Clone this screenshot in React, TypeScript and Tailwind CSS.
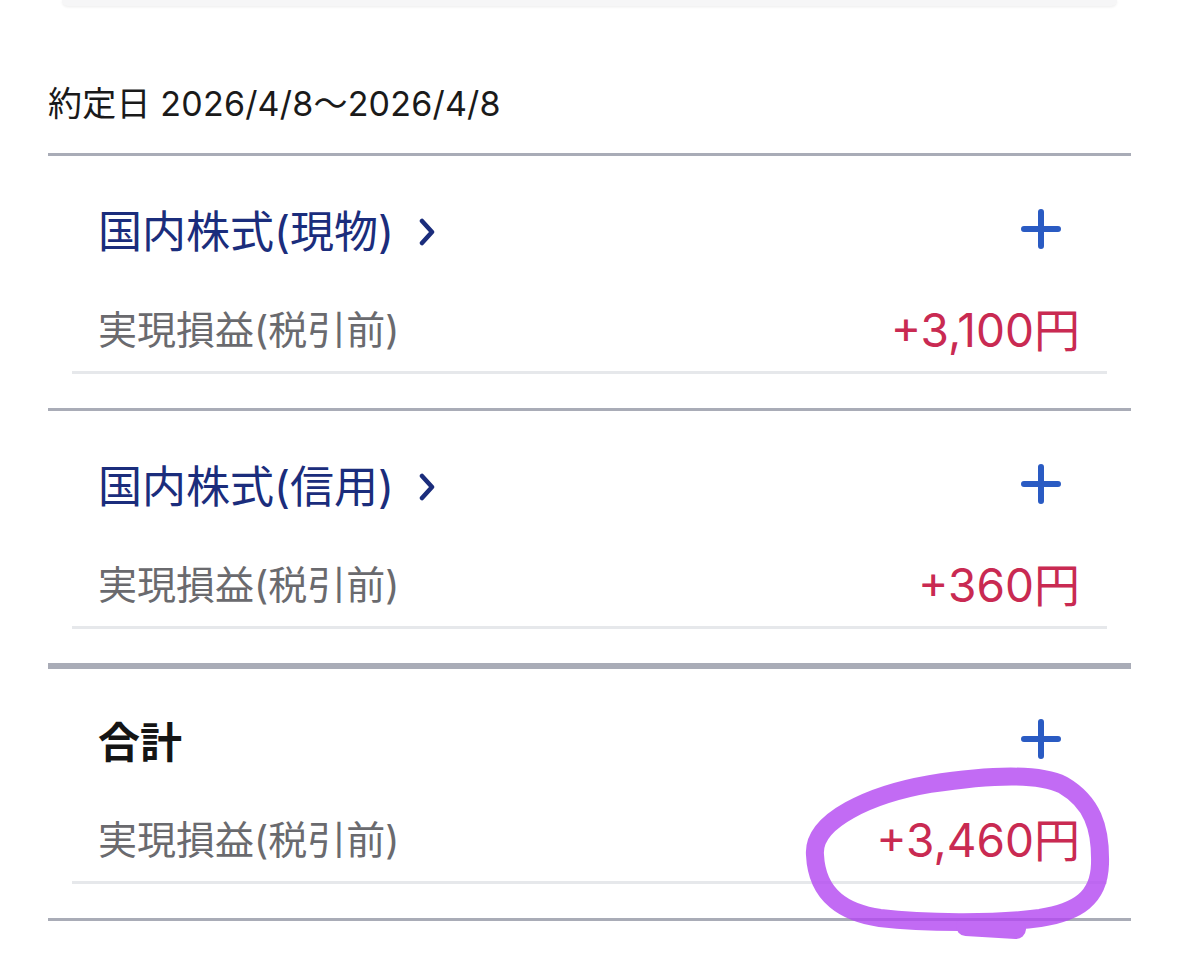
import React from 'react'

const font = { fontFamily: 'Inter, "Noto Sans CJK JP", sans-serif' }

function Plus() {
  return (
    <svg width="40" height="40" viewBox="0 0 40 40" aria-hidden="true" className="-mt-[7px]">
      <path d="M20 3V37M3 20H37" stroke="#2a5bc3" strokeWidth="6" strokeLinecap="round" fill="none" />
    </svg>
  )
}

function Chevron() {
  return (
    <svg width="16" height="28" viewBox="0 0 16 28" aria-hidden="true" className="ml-[25px]">
      <path d="M3 3L13 14L3 25" stroke="#1b2d7c" strokeWidth="4.5" strokeLinecap="round" strokeLinejoin="round" fill="none" />
    </svg>
  )
}

type Section = {
  title: string
  link: boolean
  value: string
  border: string
  titleGap: string
}

const sections: Section[] = [
  { title: '国内株式(現物)', link: true, value: '+3,100円', border: 'border-t-[3px]', titleGap: 'mt-[46px]' },
  { title: '国内株式(信用)', link: true, value: '+360円', border: 'border-t-[3px]', titleGap: 'mt-[46px]' },
  { title: '合計', link: false, value: '+3,460円', border: 'border-t-[6px]', titleGap: 'mt-[43px]' },
]

function ProfitSection({ s }: { s: Section }) {
  return (
    <div className={`${s.border} border-[#a9acb7]`}>
      <div className={`${s.titleGap} flex h-[60px] items-center justify-between pl-[50px] pr-[70px]`}>
        {s.link ? (
          <div className="flex items-center text-[44px] font-normal text-[#1b2d7c]">
            <span>{s.title}</span>
            <Chevron />
          </div>
        ) : (
          <div className="text-[42px] font-bold text-[#151515]">{s.title}</div>
        )}
        <Plus />
      </div>
      <div className="mx-[24px] mt-[28px] flex h-[84px] items-center justify-between border-b-[3px] border-[#e6e8eb] pl-[26px] pr-[27px]">
        <span className="text-[39px] text-[#6a6a6e]">実現損益(税引前)</span>
        <span className="text-[46px] text-[#c92a52]">{s.value}</span>
      </div>
      <div className="h-[34px]" />
    </div>
  )
}

export default function App() {
  return (
    <div className="relative h-[966px] w-[1179px] overflow-hidden bg-white" style={font}>
      <div className="mx-[62px] h-[6px] rounded-b-[14px] bg-[#f6f6f7] shadow-[0_1px_3px_rgba(0,0,0,0.08)]" />
      <div className="px-[48px]">
        <div className="flex h-[147px] items-center pt-[48px] text-[34px] tracking-[0.2px] text-[#1a1a1a]">
          約定日 2026/4/8〜2026/4/8
        </div>
        {sections.map((s) => (
          <ProfitSection key={s.title} s={s} />
        ))}
        <div className="border-t-[3px] border-[#a9acb7]" />
      </div>
      <svg className="pointer-events-none absolute left-0 top-0" width="1179" height="966" aria-hidden="true">
        <g opacity="0.8" fill="none" stroke="#b347f2" strokeLinecap="round" strokeLinejoin="round">
          <path
            strokeWidth="18"
            d="M815 855 C812 820 872 794 930 784 C975 777 1035 771 1063 785 C1092 802 1101 827 1100 864 C1099 898 1078 912 1040 918 C995 924 922 923 880 918 C846 913 817 897 815 855 Z"
          />
          <path strokeWidth="20" d="M966 926 L1016 929" />
        </g>
      </svg>
    </div>
  )
}
